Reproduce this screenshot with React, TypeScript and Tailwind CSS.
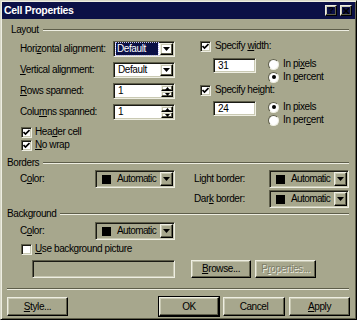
import React from "react"

const raised =
  "border border-t-[#eeeee2] border-l-[#eeeee2] border-r-black border-b-black shadow-[inset_-1px_-1px_0_#5e5e4a,inset_1px_1px_0_#c9c9b3]"
const sunken =
  "border border-t-[#5e5e4a] border-l-[#5e5e4a] border-r-[#eeeee2] border-b-[#eeeee2] shadow-[inset_1px_1px_0_#1a1a14,inset_-1px_-1px_0_#c9c9b3]"

function Arrow() {
  return (
    <svg width="7" height="4" viewBox="0 0 7 4">
      <path d="M0 0h7L3.5 4z" fill="#000" />
    </svg>
  )
}

function Check({ checked }: { checked?: boolean }) {
  return (
    <span className={`w-[11px] h-[11px] shrink-0 bg-white flex items-center justify-center ${sunken}`}>
      {checked && (
        <svg width="7" height="7" viewBox="0 0 7 7">
          <path d="M0.5 3 L2.5 5 L6.5 1" stroke="#000" strokeWidth="1.7" fill="none" />
        </svg>
      )}
    </span>
  )
}

function Radio({ on }: { on?: boolean }) {
  return (
    <span className="w-[11px] h-[11px] shrink-0 rounded-full bg-white border border-t-[#5e5e4a] border-l-[#5e5e4a] border-r-[#eeeee2] border-b-[#eeeee2] flex items-center justify-center">
      {on && <span className="w-[4px] h-[4px] rounded-full bg-black" />}
    </span>
  )
}

function Group({ label, className }: { label: string; className: string }) {
  return (
    <div className={`h-[12px] flex items-center ${className}`}>
      <span>{label}</span>
      <div className="flex-1 ml-[4px] mr-[1px] h-[2px] border-t border-t-[#5e5e4a] border-b border-b-[#eeeee2]" />
    </div>
  )
}

function Select({ value, focus }: { value: string; focus?: boolean }) {
  return (
    <div className={`w-[62px] h-[16px] bg-white flex p-[1px] ${sunken}`}>
      <div className="flex-1 flex items-center pl-[1px] pr-[2px]">
        {focus ? (
          <span className="h-[12px] w-full flex items-center pl-[1px] bg-[#0b1046] text-white outline-1 outline-dotted outline-[#c0c0ff]">
            {value}
          </span>
        ) : (
          <span className="pl-[2px]">{value}</span>
        )}
      </div>
      <div className={`w-[13px] flex items-center justify-center ${raised}`}>
        <Arrow />
      </div>
    </div>
  )
}

function Spin({ value }: { value: string }) {
  return (
    <div className={`w-[62px] h-[16px] bg-white flex p-[1px] ${sunken}`}>
      <div className="flex-1 flex items-center pl-[3px]">{value}</div>
      <div className="w-[12px] flex flex-col">
        <div className={`flex-1 flex items-center justify-center ${raised}`}>
          <svg width="5" height="3" viewBox="0 0 5 3">
            <path d="M0 3h5L2.5 0z" fill="#000" />
          </svg>
        </div>
        <div className={`flex-1 flex items-center justify-center ${raised}`}>
          <svg width="5" height="3" viewBox="0 0 5 3">
            <path d="M0 0h5L2.5 3z" fill="#000" />
          </svg>
        </div>
      </div>
    </div>
  )
}

function ColorPick() {
  return (
    <div className={`w-[80px] h-[18px] flex p-[1px] ${sunken}`}>
      <div className="flex-1 flex items-center pl-[5px] overflow-hidden">
        <span className="w-[9px] h-[9px] shrink-0 bg-black" />
        <span className="ml-[6px] tracking-[-0.6px]">Automatic</span>
      </div>
      <div className={`w-[13px] shrink-0 flex items-center justify-center ${raised}`}>
        <Arrow />
      </div>
    </div>
  )
}

function Field({ value, className }: { value: string; className: string }) {
  return (
    <div className={`bg-white flex items-center pl-[4px] ${sunken} ${className}`}>{value}</div>
  )
}

function Btn({
  children,
  className,
  disabled,
  def,
}: {
  children: React.ReactNode
  className: string
  disabled?: boolean
  def?: boolean
}) {
  return (
    <div
      className={`flex items-center justify-center ${raised} ${def ? "outline outline-1 outline-black" : ""} ${
        disabled ? "text-[#7d7d68] [text-shadow:1px_1px_0_#eeeee2]" : ""
      } ${className}`}
    >
      {children}
    </div>
  )
}

export default function App() {
  return (
    <div className="w-[357px] h-[320px] bg-[#a7a78d] border border-t-[#d8d8c8] border-l-[#d8d8c8] border-r-black border-b-black shadow-[inset_1px_1px_0_#eeeee2,inset_-1px_-1px_0_#5e5e4a] p-[1px] flex flex-col text-black font-['Liberation_Sans',Arial,sans-serif] text-[10px] tracking-[-0.4px] leading-none">
      {/* title bar */}
      <div className="h-[17px] bg-[#0b1046] flex items-center justify-between pl-[2px] pr-[3px]">
        <span className="text-white font-bold text-[10.5px] tracking-[-0.3px]">Cell Properties</span>
        <div className="flex gap-[3px]">
          <div className={`w-[12px] h-[11px] flex items-center justify-center font-bold text-[9px] ${raised}`}>?</div>
          <div className={`w-[12px] h-[11px] flex items-center justify-center ${raised}`}>
            <svg width="6" height="6" viewBox="0 0 6 6">
              <path d="M0 0L6 6M6 0L0 6" stroke="#000" strokeWidth="1.5" />
            </svg>
          </div>
        </div>
      </div>

      <div className="flex flex-col px-[5px]">
        {/* Layout */}
        <Group label="Layout" className="mt-[5px] pl-[4px]" />
        <div className="flex">
          <div className="w-[168px] pl-[13px] flex flex-col">
            <div className="mt-[5px] h-[16px] flex items-center">
              <span className="w-[93px]">
                Hori<u>z</u>ontal alignment:
              </span>
              <Select value="Default" focus />
            </div>
            <div className="mt-[5px] h-[16px] flex items-center">
              <span className="w-[93px]">
                <u>V</u>ertical alignment:
              </span>
              <Select value="Default" />
            </div>
            <div className="mt-[5px] h-[16px] flex items-center">
              <span className="w-[93px]">
                <u>R</u>ows spanned:
              </span>
              <Spin value="1" />
            </div>
            <div className="mt-[5px] h-[16px] flex items-center">
              <span className="w-[93px]">
                Colu<u>m</u>ns spanned:
              </span>
              <Spin value="1" />
            </div>
            <div className="mt-[6px] h-[12px] flex items-center gap-[3px] pl-[1px]">
              <Check checked />
              <span>
                Hea<u>d</u>er cell
              </span>
            </div>
            <div className="mt-[1px] h-[12px] flex items-center gap-[3px] pl-[1px]">
              <Check checked />
              <span>
                <u>N</u>o wrap
              </span>
            </div>
          </div>

          <div className="ml-[25px] flex flex-col">
            <div className="mt-[4px] h-[12px] flex items-center gap-[4px]">
              <Check checked />
              <span>
                Specify <u>w</u>idth:
              </span>
            </div>
            <div className="mt-[6px] flex">
              <Field value="31" className="ml-[13px] w-[43px] h-[15px]" />
              <div className="ml-[12px] flex flex-col gap-[1px]">
                <div className="h-[12px] flex items-center gap-[4px]">
                  <Radio />
                  <span>
                    In pi<u>x</u>els
                  </span>
                </div>
                <div className="h-[12px] flex items-center gap-[4px]">
                  <Radio on />
                  <span>
                    In <u>p</u>ercent
                  </span>
                </div>
              </div>
            </div>
            <div className="mt-[1px] h-[12px] flex items-center gap-[4px]">
              <Check checked />
              <span>
                Specify hei<u>g</u>ht:
              </span>
            </div>
            <div className="mt-[5px] flex">
              <Field value="24" className="ml-[13px] w-[43px] h-[15px]" />
              <div className="ml-[12px] flex flex-col gap-[1px]">
                <div className="h-[12px] flex items-center gap-[4px]">
                  <Radio on />
                  <span>In pixels</span>
                </div>
                <div className="h-[12px] flex items-center gap-[4px]">
                  <Radio />
                  <span>
                    In per<u>c</u>ent
                  </span>
                </div>
              </div>
            </div>
          </div>
        </div>

        {/* Borders */}
        <Group label="Borders" className="mt-[6px]" />
        <div className="flex">
          <div className="pl-[13px] flex">
            <div className="mt-[1px] h-[18px] flex items-center">
              <span className="w-[75px]">
                C<u>o</u>lor:
              </span>
              <ColorPick />
            </div>
          </div>
          <div className="ml-[19px] flex flex-col">
            <div className="mt-[1px] h-[18px] flex items-center">
              <span className="w-[75px]">
                Li<u>g</u>ht border:
              </span>
              <ColorPick />
            </div>
            <div className="mt-[2px] h-[18px] flex items-center">
              <span className="w-[75px]">
                Dar<u>k</u> border:
              </span>
              <ColorPick />
            </div>
          </div>
        </div>

        {/* Background */}
        <Group label="Background" className="mt-[0px]" />
        <div className="pl-[13px] flex flex-col">
          <div className="mt-[2px] h-[18px] flex items-center">
            <span className="w-[75px]">
              C<u>o</u>lor:
            </span>
            <ColorPick />
          </div>
          <div className="mt-[3px] h-[12px] flex items-center gap-[3px] pl-[1px]">
            <Check />
            <span>
              <u>U</u>se background picture
            </span>
          </div>
        </div>
        <div className="mt-[5px] flex pl-[25px]">
          <div className={`w-[143px] h-[18px] ${sunken}`} />
          <Btn className="ml-[16px] w-[60px] h-[18px]">
            <span>
              <u>B</u>rowse...
            </span>
          </Btn>
          <Btn className="ml-[4px] w-[61px] h-[18px]" disabled>
            <span>
              P<u>r</u>operties...
            </span>
          </Btn>
        </div>

        <div className="mt-[10px] mr-[1px] h-[2px] border-t border-t-[#5e5e4a] border-b border-b-[#eeeee2]" />

        <div className="mt-[7px] flex">
          <Btn className="w-[61px] h-[19px]">
            <span>
              <u>S</u>tyle...
            </span>
          </Btn>
          <div className="flex-1" />
          <Btn className="w-[60px] h-[19px]" def>
            OK
          </Btn>
          <Btn className="ml-[4px] w-[62px] h-[19px]">Cancel</Btn>
          <Btn className="ml-[4px] w-[61px] h-[19px]">
            <span>
              <u>A</u>pply
            </span>
          </Btn>
        </div>
      </div>
    </div>
  )
}
